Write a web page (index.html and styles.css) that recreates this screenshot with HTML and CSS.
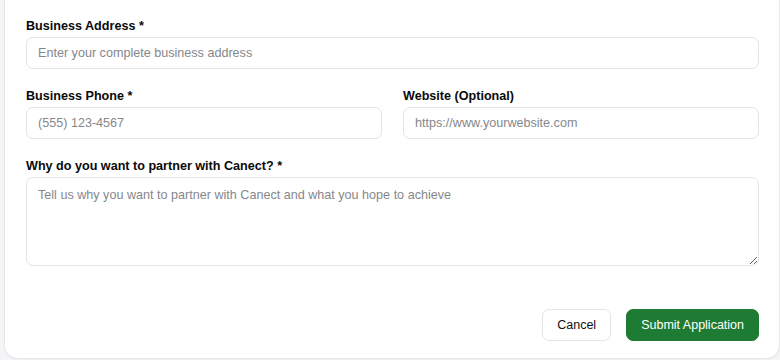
FILE: index.html
```html
<!DOCTYPE html>
<html lang="en">
<head>
<meta charset="utf-8">
<title>Partner Application</title>
<link rel="stylesheet" href="styles.css">
</head>
<body>
<div class="card">
  <form class="form">
    <div class="field">
      <label class="label" for="addr">Business Address *</label>
      <input class="input" id="addr" type="text" placeholder="Enter your complete business address">
    </div>
    <div class="row">
      <div class="field">
        <label class="label" for="phone">Business Phone *</label>
        <input class="input" id="phone" type="text" placeholder="(555) 123-4567">
      </div>
      <div class="field">
        <label class="label" for="web">Website (Optional)</label>
        <input class="input" id="web" type="text" placeholder="https://www.yourwebsite.com">
      </div>
    </div>
    <div class="field">
      <label class="label" for="why">Why do you want to partner with Canect? *</label>
      <textarea class="input textarea" id="why" placeholder="Tell us why you want to partner with Canect and what you hope to achieve"></textarea>
    </div>
    <div class="actions">
      <button type="button" class="btn btn-cancel">Cancel</button>
      <button type="button" class="btn btn-submit">Submit Application</button>
    </div>
  </form>
</div>
</body>
</html>
```

FILE: styles.css
```css
html, body {
  margin: 0;
  padding: 0;
}
body {
  background: #f4f5f6;
  font-family: "Liberation Sans", Arial, sans-serif;
  width: 780px;
  height: 360px;
  overflow: hidden;
}
.card {
  margin-left: 4px;
  background: #ffffff;
  border: 1px solid #e6e7e9;
  border-top: none;
  border-radius: 0 0 14px 14px;
  padding: 18px 20px 17px 21px;
  box-shadow: 0 1px 2px rgba(0, 0, 0, 0.04);
}
.form {
  display: flex;
  flex-direction: column;
  gap: 19px;
}
.row {
  display: grid;
  grid-template-columns: 1fr 1fr;
  column-gap: 21px;
}
.field {
  display: flex;
  flex-direction: column;
}
.label {
  font-size: 12.6px;
  line-height: 16px;
  font-weight: bold;
  color: #0a0a0a;
  margin-bottom: 3px;
}
.input {
  box-sizing: border-box;
  height: 32px;
  border: 1px solid #e3e4e6;
  border-radius: 7px;
  padding: 0 11px;
  font-family: "Liberation Sans", Arial, sans-serif;
  font-size: 12.6px;
  color: #111;
  background: #fff;
  outline: none;
}
.input::placeholder {
  color: #85878b;
}
.textarea {
  height: 89px;
  padding: 9px 11px;
  line-height: 16px;
  resize: vertical;
}
.actions {
  display: flex;
  justify-content: flex-end;
  gap: 15px;
  margin-top: 24px;
}
.btn {
  height: 32px;
  padding: 0 14px;
  border-radius: 7px;
  font-family: "Liberation Sans", Arial, sans-serif;
  font-size: 12.5px;
  cursor: pointer;
}
.btn-cancel {
  background: #ffffff;
  border: 1px solid #e3e4e6;
  color: #111111;
}
.btn-submit {
  background: #1e7b34;
  border: 1px solid #1e7b34;
  color: #ffffff;
}
```
